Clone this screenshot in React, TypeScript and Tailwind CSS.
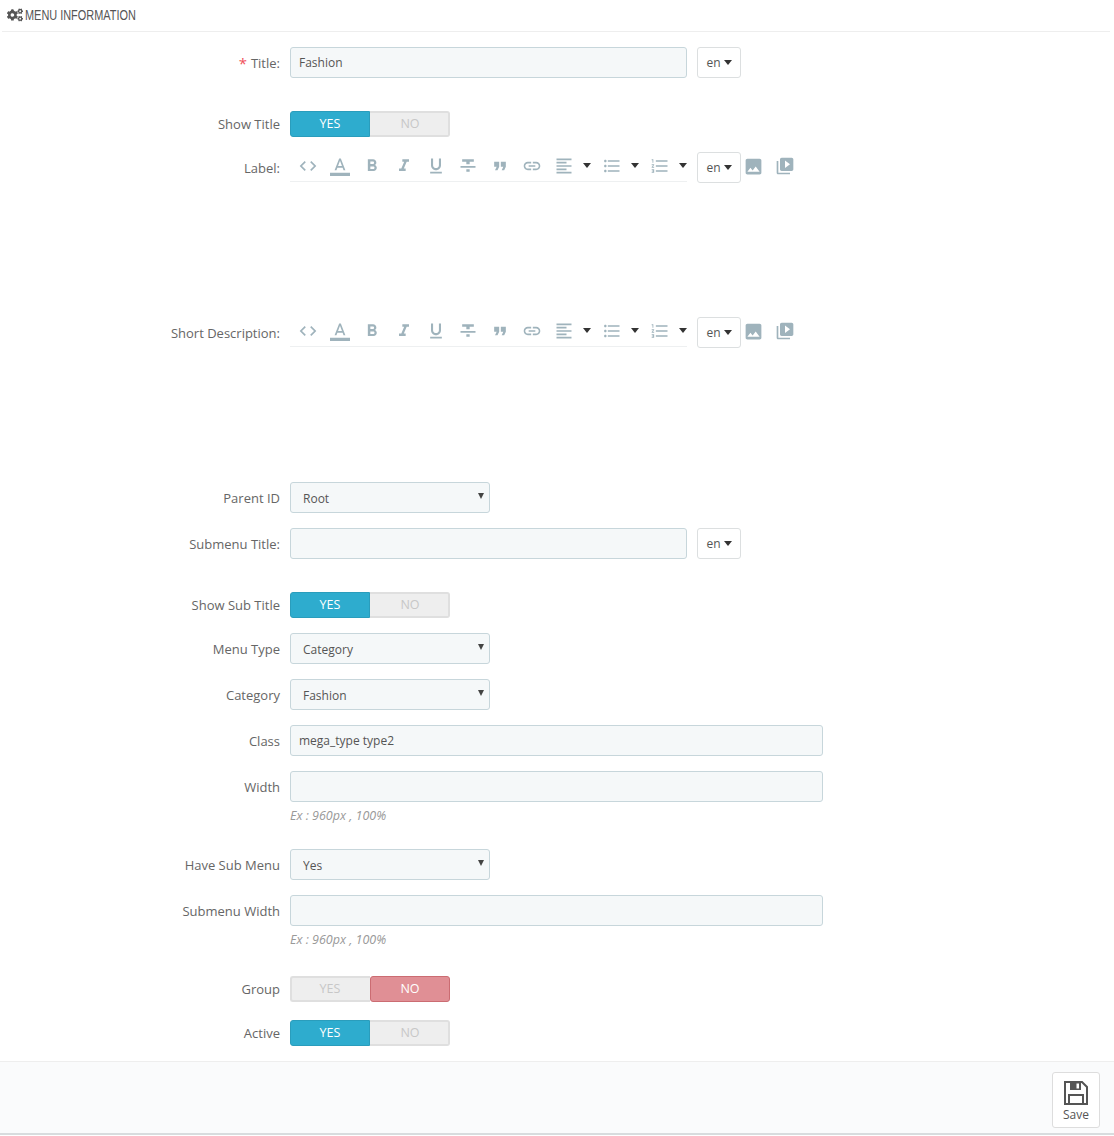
import { ReactNode } from 'react';
import { FaCogs } from 'react-icons/fa';

const toolbarIcons: { name: string; d: string; size?: number }[] = [
  { name: 'code', d: 'M9.4 16.6L4.8 12l4.6-4.6L8 6l-6 6 6 6 1.4-1.4zm5.2 0l4.6-4.6-4.6-4.6L16 6l6 6-6 6-1.4-1.4z' },
  { name: 'color', d: 'M0 20h24v4H0z M11 3L5.5 17h2.25l1.12-3h6.25l1.12 3h2.25L13 3h-2zm-1.38 9L12 5.67 14.38 12H9.62z', size: 22 },
  { name: 'bold', d: 'M15.6 10.79c.97-.67 1.65-1.77 1.65-2.79 0-2.26-1.75-4-4-4H7v14h7.04c2.09 0 3.71-1.7 3.71-3.79 0-1.52-.86-2.82-2.15-3.42zM10 6.5h3c.83 0 1.5.67 1.5 1.5s-.67 1.5-1.5 1.5h-3v-3zm3.5 9H10v-3h3.5c.83 0 1.5.67 1.5 1.5s-.67 1.5-1.5 1.5z' },
  { name: 'italic', d: 'M10 4v3h2.21l-3.42 8H6v3h8v-3h-2.21l3.42-8H18V4z' },
  { name: 'underline', d: 'M12 17c3.31 0 6-2.69 6-6V3h-2.5v8c0 1.93-1.57 3.5-3.5 3.5S8.5 12.93 8.5 11V3H6v8c0 3.31 2.69 6 6 6zm-7 2v2h14v-2H5z' },
  { name: 'strike', d: 'M10 19h4v-3h-4v3zM5 4v3h5v3h4V7h5V4H5zM3 14h18v-2H3v2z' },
  { name: 'quote', d: 'M6 17h3l2-4V7H5v6h3zm8 0h3l2-4V7h-6v6h3z' },
  { name: 'link', d: 'M3.9 12c0-1.71 1.39-3.1 3.1-3.1h4V7H7c-2.76 0-5 2.24-5 5s2.24 5 5 5h4v-1.9H7c-1.71 0-3.1-1.39-3.1-3.1zM8 13h8v-2H8v2zm9-6h-4v1.9h4c1.71 0 3.1 1.39 3.1 3.1s-1.39 3.1-3.1 3.1h-4V17h4c2.76 0 5-2.24 5-5s-2.24-5-5-5z' },
];

const alignIcon = 'M15 15H3v2h12v-2zm0-8H3v2h12V7zM3 13h18v-2H3v2zm0 8h18v-2H3v2zM3 3v2h18V3H3z';
const bulletIcon = 'M4 10.5c-.83 0-1.5.67-1.5 1.5s.67 1.5 1.5 1.5 1.5-.67 1.5-1.5-.67-1.5-1.5-1.5zm0-6c-.83 0-1.5.67-1.5 1.5S3.17 7.5 4 7.5 5.5 6.83 5.5 6 4.83 4.5 4 4.5zm0 12c-.83 0-1.5.68-1.5 1.5s.68 1.5 1.5 1.5 1.5-.68 1.5-1.5-.67-1.5-1.5-1.5zM7 19h14v-2H7v2zm0-6h14v-2H7v2zm0-8v2h14V5H7z';
const numberIcon = 'M2 17h2v.5H3v1h1v.5H2v1h3v-4H2v1zm1-9h1V4H2v1h1v3zm-1 3h1.8L2 13.1v.9h3v-1H3.2L5 10.9V10H2v1zm5-6v2h14V5H7zm0 14h14v-2H7v2zm0-6h14v-2H7v2z';
const imageIcon = 'M21 19V5c0-1.1-.9-2-2-2H5c-1.1 0-2 .9-2 2v14c0 1.1.9 2 2 2h14c1.1 0 2-.9 2-2zM8.5 13.5l2.5 3.01L14.5 12l4.5 6H5l3.5-4.5z';
const videoIcon = 'M4 6H2v14c0 1.1.9 2 2 2h14v-2H4V6zm16-4H8c-1.1 0-2 .9-2 2v12c0 1.1.9 2 2 2h12c1.1 0 2-.9 2-2V4c0-1.1-.9-2-2-2zm-8 12.5v-9l6 4.5-6 4.5z';

function Icon({ d, size = 20 }: { d: string; size?: number }) {
  return (
    <svg viewBox="0 0 24 24" width={size} height={size} fill="#9fb3bc">
      <path d={d} />
    </svg>
  );
}

function Row({ label, required, short, className, children }: { label: string; required?: boolean; short?: boolean; className?: string; children: ReactNode }) {
  return (
    <div className={`flex items-start gap-[10px] ${className ?? ''}`}>
      <label className={`w-[280px] shrink-0 flex items-center justify-end text-[13px] text-[#666] pt-[2px] ${short ? 'h-[26px]' : 'h-[31px]'}`}>
        {required && <span className="text-[15px] leading-none text-[#f0505a] mr-[4px]">*</span>}
        {label}
      </label>
      {children}
    </div>
  );
}

function TextInput({ value = '', wide }: { value?: string; wide?: boolean }) {
  return (
    <input
      readOnly
      value={value}
      className={`h-[31px] rounded-[3px] border border-[#c7d6db] bg-[#f5f8f9] px-2 text-[12px] text-[#555] outline-none ${wide ? 'w-[533px]' : 'w-[397px]'}`}
    />
  );
}

function Select({ value }: { value: string }) {
  return (
    <div className="relative w-[200px] h-[31px]">
      <select
        value={value}
        onChange={() => {}}
        className="w-full h-full appearance-none rounded-[3px] border border-[#c7d6db] bg-[#f5f8f9] pl-3 pt-[2px] text-[12px] text-[#555] outline-none"
      >
        <option>{value}</option>
      </select>
      <span className="absolute right-[6px] top-[11px] w-0 h-0 border-x-[3.5px] border-x-transparent border-t-[6px] border-t-[#444]" />
    </div>
  );
}

function Caret() {
  return <span className="inline-block w-0 h-0 border-x-[4px] border-x-transparent border-t-[5px] border-t-[#333]" />;
}

function LangButton() {
  return (
    <button className="w-[44px] h-[31px] flex items-center justify-center gap-[3px] rounded-[3px] border border-[#dcdfe0] bg-white text-[12px] text-[#555]">
      en
      <Caret />
    </button>
  );
}

function Switch({ on }: { on: boolean }) {
  return (
    <div className="flex w-[160px] h-[26px] text-[12.5px] font-medium leading-none">
      {on ? (
        <>
          <div className="w-[80px] flex items-center justify-center rounded-l-[3px] border border-[#2a9dbc] bg-[#2eacce] text-white">YES</div>
          <div className="w-[80px] flex items-center justify-center pl-[2px] rounded-r-[3px] border-2 border-l-0 border-[#dfdfdf] bg-[#eeeeee] text-[#c7c7c7]">NO</div>
        </>
      ) : (
        <>
          <div className="w-[80px] flex items-center justify-center pr-[2px] rounded-l-[3px] border-2 border-r-0 border-[#dfdfdf] bg-[#eeeeee] text-[#c7c7c7]">YES</div>
          <div className="w-[80px] flex items-center justify-center rounded-[3px] border border-[#cb6c72] bg-[#e08f95] text-white">NO</div>
        </>
      )}
    </div>
  );
}

function Editor() {
  return (
    <div className="flex items-start h-[165px]">
      <div className="w-[397px] h-[30px] flex items-center border-b border-[#eef0f1] pl-[8px] pb-[2px]">
        <div className="flex items-center h-[28px]">
          {toolbarIcons.map((icon) => (
            <span key={icon.name} className="w-[20px] mr-[12px] flex justify-center">
              <Icon d={icon.d} size={icon.size} />
            </span>
          ))}
          <span className="w-[20px] flex justify-center"><Icon d={alignIcon} /></span>
          <span className="ml-[9px] mr-[11px] flex"><Caret /></span>
          <span className="w-[20px] flex justify-center"><Icon d={bulletIcon} /></span>
          <span className="ml-[9px] mr-[11px] flex"><Caret /></span>
          <span className="w-[20px] flex justify-center"><Icon d={numberIcon} /></span>
          <span className="ml-[9px] flex"><Caret /></span>
        </div>
      </div>
      <div className="ml-[10px]"><LangButton /></div>
      <div className="flex items-center h-[28px] ml-[2px] gap-[11px]">
        <Icon d={imageIcon} size={21} />
        <Icon d={videoIcon} size={20} />
      </div>
    </div>
  );
}

function Help({ children }: { children: ReactNode }) {
  return <p className="mt-[5px] h-[18px] text-[12.5px] italic leading-[18px] text-[#999]">{children}</p>;
}

export default function App() {
  return (
    <div className="relative w-[1114px] h-[1136px] overflow-hidden bg-white font-['Open_Sans',sans-serif] text-[#555]">
      <div className="mx-[2px] w-[1108px] h-[32px] border-b border-[#eeeeee] pl-[5px] pb-[2px] flex items-center gap-[2px]">
        <FaCogs size={16} color="#555" />
        <h3 className="origin-left scale-x-[0.78] whitespace-nowrap font-['Liberation_Sans',sans-serif] text-[14px] leading-none text-[#555]">MENU INFORMATION</h3>
      </div>

      <div className="pt-[15px] flex flex-col">
        <Row label="Title:" required className="mb-[33px]">
          <TextInput value="Fashion" />
          <LangButton />
        </Row>
        <Row label="Show Title" short className="mb-[15px]">
          <Switch on />
        </Row>
        <Row label="Label:"><Editor /></Row>
        <Row label="Short Description:"><Editor /></Row>
        <Row label="Parent ID" className="mb-[15px]"><Select value="Root" /></Row>
        <Row label="Submenu Title:" className="mb-[33px]">
          <TextInput />
          <LangButton />
        </Row>
        <Row label="Show Sub Title" short className="mb-[15px]"><Switch on /></Row>
        <Row label="Menu Type" className="mb-[15px]"><Select value="Category" /></Row>
        <Row label="Category" className="mb-[15px]"><Select value="Fashion" /></Row>
        <Row label="Class" className="mb-[15px]"><TextInput value="mega_type type2" wide /></Row>
        <Row label="Width" className="mb-[24px]">
          <div>
            <TextInput wide />
            <Help>Ex : 960px , 100%</Help>
          </div>
        </Row>
        <Row label="Have Sub Menu" className="mb-[15px]"><Select value="Yes" /></Row>
        <Row label="Submenu Width" className="mb-[27px]">
          <div>
            <TextInput wide />
            <Help>Ex : 960px , 100%</Help>
          </div>
        </Row>
        <Row label="Group" short className="mb-[18px]"><Switch on={false} /></Row>
        <Row label="Active" short className="mb-[15px]"><Switch on /></Row>
      </div>

      {/* Footer */}
      <div className="h-[74px] border-t border-b-2 border-t-[#eeeeee] border-b-[#d8dcde] bg-[#fafbfc] flex justify-end pt-[10px] pr-[14px]">
        <button className="w-[48px] h-[56px] rounded-[3px] border border-[#dddddd] bg-white flex flex-col items-center pt-[7px] text-[12px] leading-none text-[#555]">
          <svg viewBox="0 0 26 26" width="26" height="26" fill="none">
            <path d="M2 2h17l5 5v17H2z" stroke="#555" strokeWidth="2" />
            <path d="M7 2h11v8H7z" fill="#555" />
            <path d="M13.5 3.5h2.5v5h-2.5z" fill="#fff" />
            <path d="M6 15h14v9H6z" stroke="#555" strokeWidth="2" />
          </svg>
          <span className="mt-[3px]">Save</span>
        </button>
      </div>
    </div>
  );
}
